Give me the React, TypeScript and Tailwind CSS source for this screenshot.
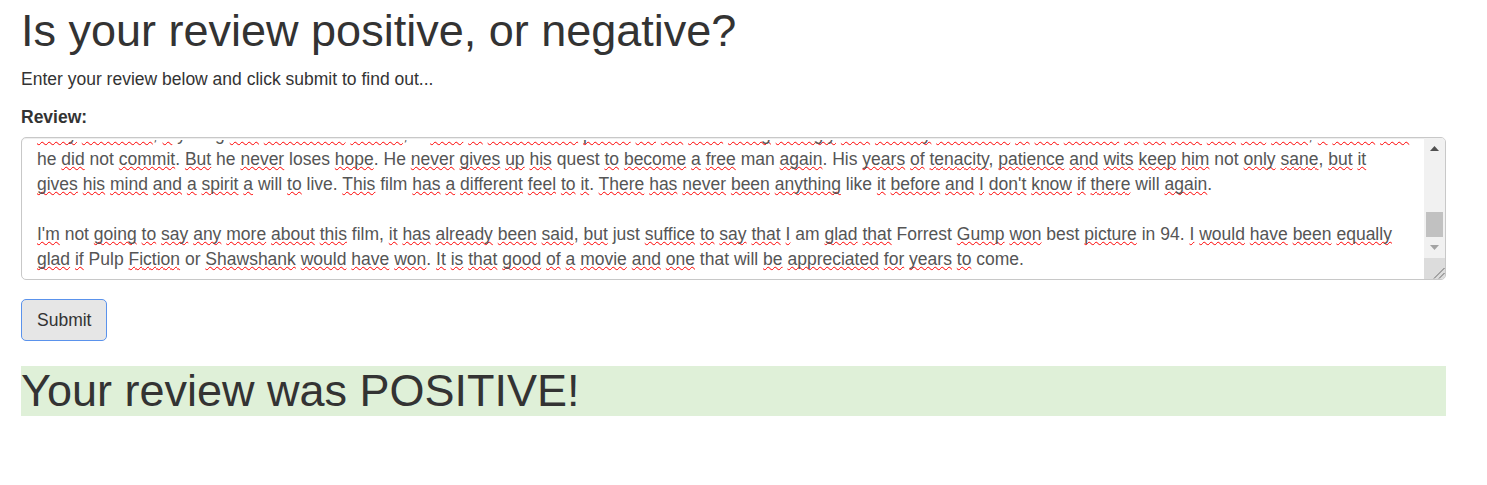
import React from "react";

const LINES: string[] = [
  "~Andy ~Dufresne, ~a young ~and ~successful ~banker, is ~sent ~to ~Shawshank ~prison ~for ~life ~after ~being ~wrongly ~and ~unfairly ~convicted ~of ~the ~murder ~of ~his ~wife ~and ~her ~lover, ~a ~crime ~that",
  "he ~did not ~commit. ~But he ~never loses ~hope. He ~never ~gives ~up ~his quest ~to ~become ~a ~free man ~again. His ~years ~of ~tenacity, ~patience ~and ~wits ~keep ~him not ~only ~sane, ~but ~it",
  "~gives ~his ~mind ~and ~a ~spirit ~a will ~to live. ~This film ~has ~a ~different ~feel ~to ~it. ~There ~has ~never ~been ~anything like ~it ~before ~and ~I ~don't ~know ~if ~there will ~again.",
  "",
  "~I'm not ~going ~to ~say ~any ~more ~about ~this film, ~it ~has ~already ~been ~said, ~but just ~suffice ~to ~say ~that ~I am ~glad ~that Forrest ~Gump ~won best ~picture in 94. ~I ~would ~have ~been ~equally",
  "~glad ~if Pulp ~Fiction or ~Shawshank ~would ~have ~won. ~It ~is ~that ~good ~of ~a ~movie ~and ~one that will ~be ~appreciated ~for ~years ~to come.",
];

function Line({ text }: { text: string }) {
  if (!text) return <div className="h-[25px] shrink-0" />;
  const tokens = text.split(" ");
  return (
    <div className="h-[25px] shrink-0 whitespace-nowrap">
      {tokens.map((t, i) => {
        const u = t.startsWith("~");
        const w = u ? t.slice(1) : t;
        const m = w.match(/^(.*?)([.,!?]*)$/);
        const word = m ? m[1] : w;
        const punct = m ? m[2] : "";
        return (
          <React.Fragment key={i}>
            {i > 0 ? " " : null}
            {u ? (
              <span className="underline decoration-wavy decoration-[#ff0000] decoration-1 underline-offset-[1px] [text-decoration-skip-ink:none]">
                {word}
              </span>
            ) : (
              word
            )}
            {punct}
          </React.Fragment>
        );
      })}
    </div>
  );
}

function Scrollbar() {
  return (
    <div className="flex w-[21px] shrink-0 flex-col">
      <div className="flex flex-1 flex-col bg-[#f1f1f1]">
        <div className="flex h-[21px] items-center justify-center">
          <svg width="9" height="5" viewBox="0 0 9 5">
            <polygon points="0,5 4.5,0 9,5" fill="#505050" />
          </svg>
        </div>
        <div className="flex flex-1 flex-col justify-end pl-[2px] pr-[2px]">
          <div className="h-[25px] bg-[#c1c1c1]" />
        </div>
        <div className="flex h-[21px] items-center justify-center">
          <svg width="9" height="5" viewBox="0 0 9 5">
            <polygon points="0,0 9,0 4.5,5" fill="#a3a3a3" />
          </svg>
        </div>
      </div>
      <div className="h-[21px] bg-[#dcdcdc]">
        <svg width="21" height="21" viewBox="0 0 21 21">
          <line x1="10" y1="20.5" x2="20.5" y2="10" stroke="#6b6b6b" strokeWidth="1" />
          <line x1="15" y1="20.5" x2="20.5" y2="15" stroke="#6b6b6b" strokeWidth="1" />
        </svg>
      </div>
    </div>
  );
}

export default function App() {
  return (
    <div
      className="min-h-[485px] bg-white px-[21px] pt-[6px] text-[#333]"
      style={{ fontFamily: '"Liberation Sans", Arial, Helvetica, sans-serif' }}
    >
      <div className="w-[1425px]">
        <h1 className="mb-[11.5px] text-[45px] leading-[49.5px] font-normal">
          Is your review positive, or negative?
        </h1>
        <p className="mb-[12.5px] text-[17.5px] leading-[25px]">
          Enter your review below and click submit to find out...
        </p>
        <div className="mb-[7.5px] text-[17.5px] leading-[25px] font-bold">Review:</div>
        <div className="flex h-[143px] overflow-hidden rounded-[5px] border border-[#c8c8c8] bg-white shadow-[inset_0_1px_1px_rgba(0,0,0,0.075)]">
          <div className="mt-[2px] flex min-w-0 flex-1 flex-col justify-end overflow-hidden pb-[7.5px] pl-[15px] text-[17.5px] leading-[25px] text-[#555]">
            {LINES.map((l, i) => (
              <Line key={i} text={l} />
            ))}
          </div>
          <Scrollbar />
        </div>
        <div className="mt-[19px]">
          <button className="h-[42px] rounded-[5px] border border-[#5a92ec] bg-[#e6e6e6] px-[15px] text-[17.5px] leading-[25px] text-[#333]">
            Submit
          </button>
        </div>
        <div className="mt-[25px] bg-[#dff0d8] text-[45px] leading-[49.5px]">
          Your review was POSITIVE!
        </div>
      </div>
    </div>
  );
}
